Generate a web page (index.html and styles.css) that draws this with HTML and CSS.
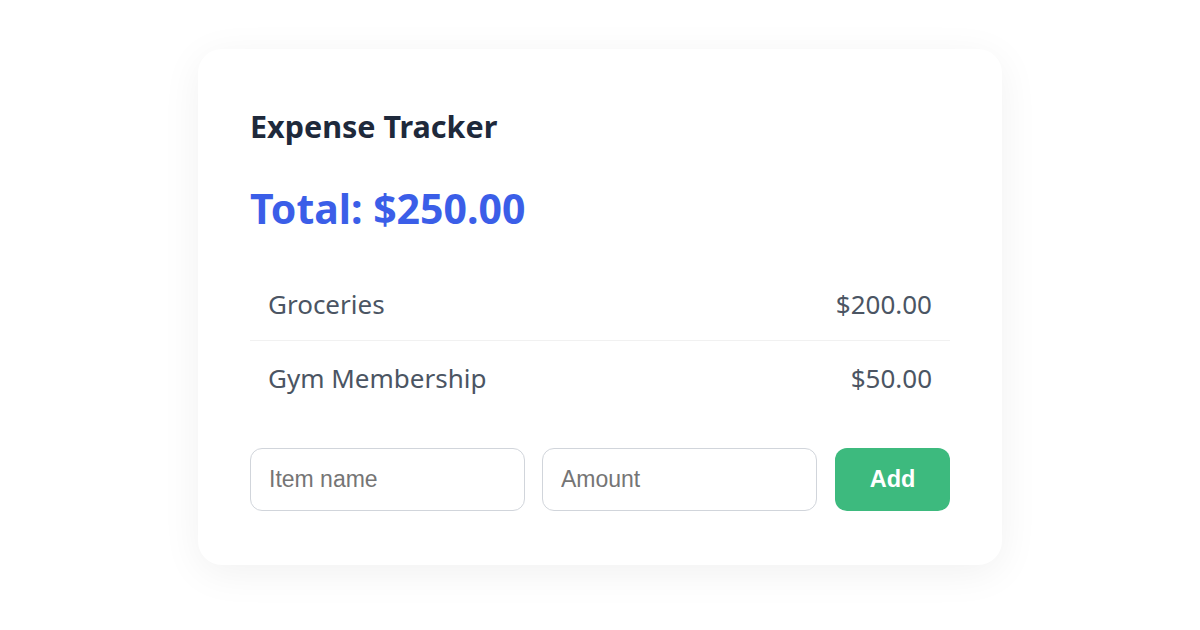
FILE: index.html
```html
<!DOCTYPE html>
<html>
<head>
<meta charset="utf-8">
<link rel="stylesheet" href="styles.css">
</head>
<body>
<div class="page">
  <div class="card">
    <h1 class="title">Expense Tracker</h1>
    <div class="total">Total: $250.00</div>
    <ul class="list">
      <li class="row"><span>Groceries</span><span>$200.00</span></li>
      <li class="row"><span>Gym Membership</span><span>$50.00</span></li>
    </ul>
    <div class="form">
      <input class="field" type="text" placeholder="Item name">
      <input class="field" type="text" placeholder="Amount">
      <button class="btn">Add</button>
    </div>
  </div>
</div>
</body>
</html>
```
FILE: styles.css
```css
* { box-sizing: border-box; }
html, body { margin: 0; padding: 0; background: #ffffff; }
body { font-family: "Noto Sans", "Open Sans", sans-serif; }
.page {
  width: 1200px;
  height: 630px;
  display: flex;
  justify-content: center;
  padding-top: 49px;
}
.card {
  width: 804px;
  height: 516px;
  background: #fff;
  border-radius: 24px;
  box-shadow: 0 8px 40px rgba(0,0,0,0.06);
  padding: 55px 52px 0;
  display: flex;
  flex-direction: column;
}
.title {
  margin: 0;
  font-size: 30.5px;
  font-weight: 700;
  color: #1e293b;
  line-height: 44px;
}
.total {
  margin-top: 36px;
  font-size: 41px;
  font-weight: 700;
  color: #3b5ee8;
  line-height: 48px;
}
.list {
  list-style: none;
  margin: 36px 0 0;
  padding: 0;
}
.row {
  display: flex;
  justify-content: space-between;
  align-items: center;
  height: 73px;
  padding: 0 18px;
  font-size: 26px;
  color: #4b5563;
  border-bottom: 1px solid #f1f1f1;
}
.row:last-child { border-bottom: none; }
.form {
  margin-top: 34px;
  display: flex;
  gap: 17px;
}
.field {
  width: 275px;
  height: 63px;
  border: 1px solid #d1d5db;
  border-radius: 12px;
  padding: 0 18px;
  font-family: "Liberation Sans", Arial, sans-serif;
  font-size: 23px;
  color: #333;
  outline: none;
}
.field::placeholder { color: #757575; }
.btn {
  flex: 1;
  margin-left: 1px;
  height: 63px;
  border: none;
  border-radius: 12px;
  background: #3dba7e;
  color: #fff;
  font-family: "Liberation Sans", Arial, sans-serif;
  font-weight: 700;
  font-size: 23.5px;
}
```
